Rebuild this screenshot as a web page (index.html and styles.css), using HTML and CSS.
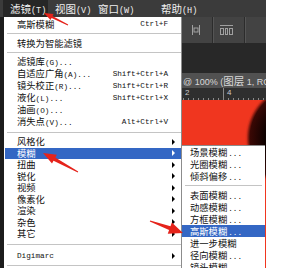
FILE: index.html
```html
<!DOCTYPE html>
<html>
<head>
<meta charset="utf-8">
<link rel="stylesheet" href="styles.css">
</head>
<body>
<div class="app">
  <div class="menubar">
    <span class="mb-item mb1">滤镜<span class="m">(T)</span></span>
    <span class="mb-item mb2">视图<span class="m">(V)</span></span>
    <span class="mb-item mb3">窗口<span class="m">(W)</span></span>
    <span class="mb-item">帮助<span class="m">(H)</span></span>
  </div>
  <div class="main">
    <div class="strip"></div>
    <div class="menu">
      <div class="row"><span class="label">高斯模糊</span><span class="key">Ctrl+F</span><span class="arr"></span></div>
      <div class="sep"></div>
      <div class="row"><span class="label">转换为智能滤镜</span><span class="arr"></span></div>
      <div class="sep"></div>
      <div class="row"><span class="label">滤镜库<span class="m">(G)...</span></span><span class="arr"></span></div>
      <div class="row"><span class="label">自适应广角<span class="m">(A)...</span></span><span class="key">Shift+Ctrl+A</span><span class="arr"></span></div>
      <div class="row"><span class="label">镜头校正<span class="m">(R)...</span></span><span class="key">Shift+Ctrl+R</span><span class="arr"></span></div>
      <div class="row"><span class="label">液化<span class="m">(L)...</span></span><span class="key">Shift+Ctrl+X</span><span class="arr"></span></div>
      <div class="row"><span class="label">油画<span class="m">(O)...</span></span><span class="arr"></span></div>
      <div class="row"><span class="label">消失点<span class="m">(V)...</span></span><span class="key">Alt+Ctrl+V</span><span class="arr"></span></div>
      <div class="sep sep8"></div>
      <div class="group2">
        <div class="row"><span class="label">风格化</span><span class="arr on"></span></div>
        <div class="row hl"><span class="label">模糊</span><span class="arr on"></span></div>
        <div class="row"><span class="label">扭曲</span><span class="arr on"></span></div>
        <div class="row"><span class="label">锐化</span><span class="arr on"></span></div>
        <div class="row"><span class="label">视频</span><span class="arr on"></span></div>
        <div class="row"><span class="label">像素化</span><span class="arr on"></span></div>
        <div class="row"><span class="label">渲染</span><span class="arr on"></span></div>
        <div class="row"><span class="label">杂色</span><span class="arr on"></span></div>
        <div class="row"><span class="label">其它</span><span class="arr on"></span></div>
      </div>
      <div class="sep sep-l"></div>
      <div class="row"><span class="label m">Digimarc</span><span class="arr on"></span></div>
      <div class="sep"></div>
    </div>
    <div class="ws">
      <div class="toolbar">
        <svg class="ico1" width="8" height="10" viewBox="0 0 8 10"><rect x="0" y="0" width="1" height="10" fill="#a0a0a0"/><rect x="7" y="0" width="1" height="10" fill="#a0a0a0"/><rect x="2" y="3" width="4" height="4" fill="none" stroke="#a0a0a0" stroke-width="1"/></svg>
        <span class="tsep"></span>
        <svg class="ico2" width="13" height="10" viewBox="0 0 13 10"><rect x="0" y="0" width="13" height="1" fill="#a0a0a0"/><rect x="0.5" y="3.5" width="3" height="6" fill="none" stroke="#a0a0a0"/><rect x="5.5" y="3.5" width="2" height="6" fill="none" stroke="#a0a0a0"/><rect x="9.5" y="3.5" width="3" height="6" fill="none" stroke="#a0a0a0"/></svg>
        <span class="tsep tsep2"></span>
      </div>
      <div class="band"></div>
      <div class="tab">@ 100% (<span class="cjk">图层</span> 1, RG</div>
      <div class="ruler">
        <span class="rseg rseg1">2</span>
        <span class="rseg rseg2">4</span>
      </div>
      <div class="canvas"></div>
    </div>
  </div>

  <div class="submenu">
    <div class="srow">场景模糊<span class="m">...</span></div>
    <div class="srow">光圈模糊<span class="m">...</span></div>
    <div class="srow">倾斜偏移<span class="m">...</span></div>
    <div class="ssep"></div>
    <div class="srow">表面模糊<span class="m">...</span></div>
    <div class="srow">动感模糊<span class="m">...</span></div>
    <div class="srow">方框模糊<span class="m">...</span></div>
    <div class="srow hl">高斯模糊<span class="m">...</span></div>
    <div class="srow">进一步模糊</div>
    <div class="srow">径向模糊<span class="m">...</span></div>
    <div class="srow">镜头模糊<span class="m">...</span></div>
  </div>

  <svg class="marks" width="266" height="268" viewBox="0 0 266 268">
    <polygon fill="#e5231b" points="44,13 53.6,13.9 52.5,16.1 68.2,24.6 67.8,25.4 51.6,17.9 50.5,20.1"/>
    <polygon fill="#e5231b" points="43,153 56.8,154.8 55.3,157.6 78.2,171.6 77.8,172.4 53.5,160.8 52,163.6"/>
    <polygon fill="#e5231b" points="183,233 171.85,222.56 170.5,226.3 150.2,220.5 149.8,221.5 169.1,230.1 167.75,233.84"/>
  </svg>
</div>
</body>
</html>
```

FILE: styles.css
```css
html, body {
  margin: 0;
  padding: 0;
}
body {
  width: 282px;
  height: 268px;
  overflow: hidden;
  background: #ffffff;
  font-family: "Noto Sans CJK SC", "Noto Sans", sans-serif;
}
.m {
  font-family: "Liberation Mono", "Noto Sans CJK SC", monospace;
  font-size: 7.7px;
}
.app {
  position: relative;
  width: 266px;
  height: 268px;
  display: flex;
  flex-direction: column;
  background: #2a2a2a;
}
.menubar {
  height: 17px;
  flex: none;
  background: #3b3b3b;
  display: flex;
  align-items: stretch;
  padding-left: 3px;
  color: #f0f0f0;
  font-size: 10.5px;
}
.mb-item {
  line-height: 17px;
  white-space: nowrap;
}
.mb-item .m {
  font-size: 8.5px;
}
.mb1 {
  width: 45px;
  box-sizing: border-box;
  padding-left: 7px;
  margin-right: 7px;
  background: #262626;
}
.mb2 { width: 43px; }
.mb3 { width: 63px; }

.main {
  flex: 1;
  display: flex;
  min-height: 0;
}
.strip {
  width: 4px;
  flex: none;
  background: #1c1c1c;
}
.menu {
  width: 178px;
  flex: none;
  box-sizing: border-box;
  background: #ffffff;
  border-right: 1px solid #8c8c8c;
  padding: 1px 0 0 1px;
  font-size: 9.3px;
  color: #111111;
  overflow: hidden;
}
.row {
  height: 12px;
  display: flex;
  align-items: center;
  padding-left: 12px;
  line-height: 11px;
  white-space: nowrap;
}
.group2 .row {
  height: 11.5px;
  line-height: 11px;
}
.label {
  flex: 1;
}
.label.m {
  font-size: 7.7px;
}
.key {
  font-family: "Liberation Mono", monospace;
  font-size: 7.7px;
}
.arr {
  width: 13px;
  height: 100%;
  flex: none;
  box-sizing: border-box;
  padding-left: 4px;
  display: flex;
  align-items: center;
}
.arr.on::before {
  content: "";
  width: 0;
  height: 0;
  border-left: 3px solid #000000;
  border-top: 3px solid transparent;
  border-bottom: 3px solid transparent;
}
.row.hl {
  background: #3467c4;
  color: #ffffff;
}
.row.hl .arr.on::before {
  border-left-color: #ffffff;
}
.sep {
  height: 7px;
  display: flex;
  align-items: center;
  padding-left: 2px;
}
.sep::after {
  content: "";
  flex: 1;
  height: 1px;
  background: #c4c4c4;
}
.sep8 { height: 8px; }
.sep-l { height: 10.5px; }

.ws {
  flex: 1;
  display: flex;
  flex-direction: column;
  min-width: 0;
}
.toolbar {
  height: 26px;
  flex: none;
  background: #434343;
  display: flex;
  align-items: center;
  padding-left: 10px;
}
.ico1 { flex: none; }
.tsep {
  width: 1px;
  height: 26px;
  flex: none;
  margin-left: 12px;
  background: #2c2c2c;
  border-right: 1px solid #555555;
}
.ico2 {
  flex: none;
  margin-left: 6px;
}
.tsep2 { margin-left: 11px; }
.band {
  height: 30px;
  flex: none;
  background: #282828;
}
.tab {
  height: 15px;
  flex: none;
  background: #515151;
  color: #d8d8d8;
  font-family: "Liberation Sans", "Noto Sans CJK SC", sans-serif;
  font-size: 9px;
  line-height: 15px;
  white-space: nowrap;
  overflow: hidden;
  padding-left: 1px;
}
.tab .cjk {
  font-family: "Noto Sans CJK SC", sans-serif;
  font-size: 10.5px;
}
.ruler {
  height: 12px;
  flex: none;
  display: flex;
  background-color: #2f2f2f;
  background-image: repeating-linear-gradient(90deg, #8a8a8a 0 1px, transparent 1px 5px);
  background-size: 100% 2px;
  background-position: 1px 100%;
  background-repeat: repeat-x;
  color: #cccccc;
  font-family: "Liberation Sans", sans-serif;
  font-size: 8px;
  line-height: 9px;
  overflow: hidden;
}
.rseg {
  padding-left: 3px;
  box-sizing: border-box;
}
.rseg1 { width: 41px; }
.rseg2 {
  flex: 1;
  border-left: 1px solid #8a8a8a;
}
.canvas {
  flex: 1;
  background:
    radial-gradient(circle at 118px 38px, #050000 0, #0b0100 34px, #3a0804 50px, #d8301c 53.5px, rgba(240,54,31,0) 55px),
    #f0361f;
}

.submenu {
  position: absolute;
  left: 181px;
  top: 145px;
  width: 84px;
  height: 123px;
  box-sizing: border-box;
  background: #ffffff;
  border-left: 1px solid #8c8c8c;
  border-top: 1px solid #8c8c8c;
  font-size: 9.3px;
  color: #111111;
  overflow: hidden;
}
.srow {
  height: 12px;
  line-height: 12px;
  padding-left: 8px;
  white-space: nowrap;
}
.srow .m {
  margin-left: 1px;
}
.srow.hl {
  background: #3467c4;
  color: #ffffff;
}
.ssep {
  height: 7px;
  display: flex;
  align-items: center;
  padding: 0 3px;
}
.ssep::after {
  content: "";
  flex: 1;
  height: 1px;
  background: #c4c4c4;
}
.marks {
  position: absolute;
  left: 0;
  top: 0;
  pointer-events: none;
}
```
